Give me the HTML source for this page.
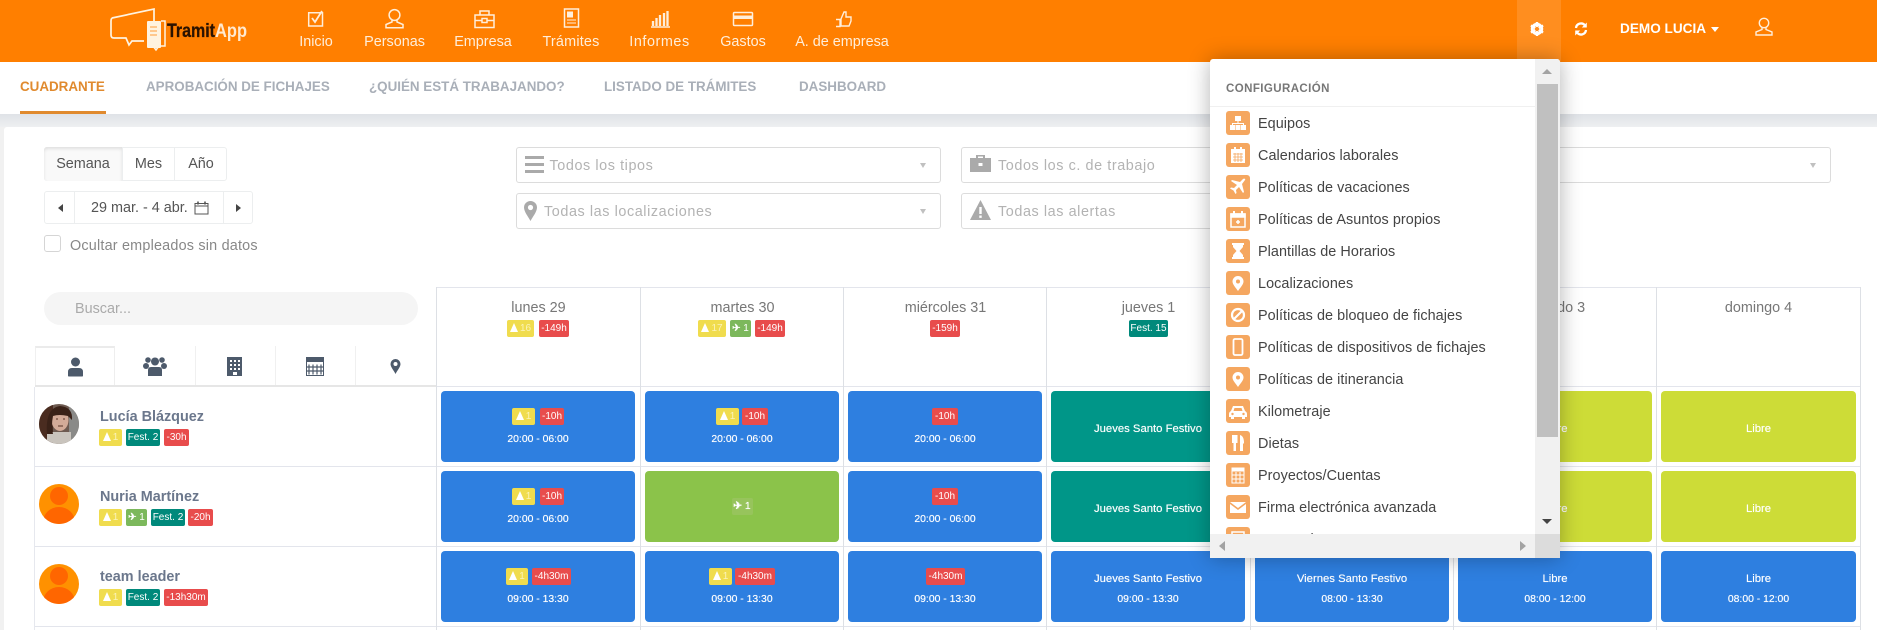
<!DOCTYPE html>
<html lang="es"><head><meta charset="utf-8"><title>TramitApp</title>
<style>
*{box-sizing:border-box}
html,body{margin:0;padding:0}
body{width:1877px;height:630px;position:relative;overflow:hidden;background:#f1f1f1;font-family:"Liberation Sans",sans-serif;color:#777}
.a,.c,.b,.t,.n,.l,.tab{position:absolute}
svg{position:absolute;overflow:visible}
.n{top:33px;height:18px;line-height:18px;font-size:14.4px;color:#ffeeda;text-align:center;white-space:nowrap;transform:translateX(-50%)}
.tab{top:78px;height:18px;line-height:18px;font-size:13.4px;font-weight:bold;color:#a9afb8;white-space:nowrap}
.c{border-radius:4px;color:#fff;text-align:center;font-size:10.4px;width:194px;height:71px;text-shadow:0 0 .6px rgba(255,255,255,.8)}
.bl{background:#2e7fe0}.gr{background:#8bc34a}.te{background:#009688}.li{background:#cddc37}
.b{height:17px;border-radius:2px;line-height:17px;font-size:10px;color:#fff;text-align:center;white-space:nowrap}
.y{background:#f0dc4e;color:#fbf3b8}.r{background:#e84c4c}.g{background:#7cb85c}.e{background:#00897b}
.t{left:0;width:100%;height:14px;line-height:14px;color:#fff;white-space:nowrap}
.j{font-size:11.3px}
u{display:inline-block;width:0;height:0;border-left:4.5px solid transparent;border-right:4.5px solid transparent;border-bottom:9px solid #fff;vertical-align:-1px;margin-right:2px;text-decoration:none}
.vl{position:absolute;width:1px;background:#dde0e5;top:287px;height:343px}
.hl{position:absolute;height:1px;background:#e3e5ec}
.nm{position:absolute;left:100px;font-size:14.4px;font-weight:bold;color:#6b778c;height:18px;line-height:18px;white-space:nowrap}
.f{position:absolute;border:1px solid #dcdcdc;border-radius:3px;height:36px;background:#fff}
.ph{position:absolute;font-size:14.4px;color:#b3b3b3;letter-spacing:.58px;white-space:nowrap;height:18px;line-height:18px}
.car{position:absolute;width:0;height:0;border-left:3.5px solid transparent;border-right:3.5px solid transparent;border-top:5px solid #c0c0c0}
.d{position:absolute;font-size:14.4px;color:#777;text-align:center;white-space:nowrap;height:18px;line-height:18px;width:203px;top:299px}
.ic{position:absolute;left:16px;width:24px;height:24px;border-radius:3px;background:#f5a760}
.ic svg{left:0;top:0;width:24px;height:24px}
.it{position:absolute;left:48px;font-size:14.4px;color:#444;white-space:nowrap;height:20px;line-height:20px;letter-spacing:.06px;margin-top:1px}
</style></head><body>

<!-- header -->
<div class="a" style="left:0;top:0;width:1877px;height:62px;background:#ff7f00"></div>
<div class="a" style="left:1517px;top:0;width:44px;height:62px;background:#ff8e1f"></div>

<svg style="left:100px;top:0" width="160" height="62" viewBox="0 0 160 62" fill="none">
<path d="M12 18 L54 9 V22 M44 41 H32 L29 45 L26 38 H14 Q11 38 11 35 V21 Q11 19 12 18" stroke="#fff3e0" stroke-width="1.7"/>
<rect x="47" y="21" width="14" height="27" rx="1" fill="#fff3e0"/>
<path d="M61 21 H65 V46 H59 L56 50 L53 46 H47" stroke="#fff3e0" stroke-width="1.5"/>
<path d="M50 27h7M50 31h7M50 35h7" stroke="#ff9c3a" stroke-width="1"/>
<text x="67" y="37" font-family="Liberation Sans" font-weight="bold" font-size="19.500" fill="#2b1300" stroke="#2b1300" stroke-width=".3" textLength="48" lengthAdjust="spacingAndGlyphs">Tramit</text>
<text x="115" y="37" font-family="Liberation Sans" font-weight="bold" font-size="19.500" fill="#ffe9d0" textLength="32" lengthAdjust="spacingAndGlyphs">App</text>
</svg>

<svg style="left:0;top:0" width="900" height="34" fill="none" stroke="#ffeeda" stroke-width="1.5">
<path d="M308.7 12.7H322.500V26H308.700Z"/><path d="M312 18l3 4 7-11" stroke-width="1.8"/>
<circle cx="394.500" cy="15" r="5.400"/><path d="M392 20v2l-6 2.500v3.300h17v-3.300l-6-2.500v-2"/>
<path d="M475 15h19v12.500h-19zM480 15v-4h9v4M475 20.500h7M487 20.500h7"/><rect x="482" y="18.500" width="5" height="4"/>
<rect x="564.500" y="9" width="14" height="18"/><rect x="567" y="11.500" width="6" height="6" fill="#ffeeda" stroke="none"/><path d="M567 20h9M567 23h9" stroke-width="1"/>
<path d="M651 27h19"/><path d="M653 26v-5M656.500 26v-8M660 26v-11M664 26v-13M667.500 26v-15" stroke-width="2.300"/>
<rect x="733.500" y="12.500" width="19" height="13" rx="1"/><rect x="733.500" y="15.500" width="19" height="3.500" fill="#ffeeda" stroke="none"/>
<path d="M841 19l3-7h2v5h5v4l-2 5h-8v-7zM836 19.500h4v7h-4" stroke-width="1.400"/>
</svg>

<div class="n" style="left:316px">Inicio</div>
<div class="n" style="left:394.500px">Personas</div>
<div class="n" style="left:483px">Empresa</div>
<div class="n" style="left:571px;letter-spacing:.2px">Trámites</div>
<div class="n" style="left:659.500px;letter-spacing:.55px">Informes</div>
<div class="n" style="left:743px">Gastos</div>
<div class="n" style="left:842px">A. de empresa</div>

<!-- header right -->
<svg style="left:1528.500px;top:21px" width="16" height="16" viewBox="0 0 16 16"><circle cx="8" cy="8" r="4.700" fill="none" stroke="#fff" stroke-width="3"/><path d="M8 1v14M1.900 4.500l12.200 7M1.900 11.500l12.200-7" stroke="#fff" stroke-width="2.400"/><circle cx="8" cy="8" r="2.100" fill="#ff8e1f"/></svg>
<svg style="left:1574px;top:22px" width="14" height="14" viewBox="0 0 14 14" fill="none" stroke="#fff" stroke-width="2.300"><path d="M2 6a5 5 0 0 1 9-2.500M12 8a5 5 0 0 1-9 2.500"/><path d="M12.800 0.500v5h-5z M1.200 13.500v-5h5z" fill="#fff" stroke="none"/></svg>
<div class="a" style="left:1620px;top:21px;height:16px;line-height:16px;font-size:13.600px;font-weight:bold;color:#fff;white-space:nowrap">DEMO LUCIA</div>
<div class="a" style="left:1711px;top:27px;width:0;height:0;border-left:4.500px solid transparent;border-right:4.500px solid transparent;border-top:5px solid #fff"></div>
<svg style="left:1754px;top:17px" width="20" height="20" fill="none" stroke="#ffeeda" stroke-width="1.400"><circle cx="10" cy="6" r="4.700"/><path d="M8 10.500v2l-6 2.500v3h16v-3l-6-2.500v-2"/></svg>

<!-- tabs bar -->
<div class="a" style="left:0;top:62px;width:1877px;height:52px;background:#fff"></div>
<div class="tab" style="left:20px;color:#e08a2e">CUADRANTE</div>
<div class="tab" style="left:146px">APROBACIÓN DE FICHAJES</div>
<div class="tab" style="left:369px">¿QUIÉN ESTÁ TRABAJANDO?</div>
<div class="tab" style="left:604px">LISTADO DE TRÁMITES</div>
<div class="tab" style="left:799px">DASHBOARD</div>
<div class="a" style="left:20px;top:111px;width:86px;height:3px;background:#e08a2e"></div>
<div class="a" style="left:0;top:114px;width:1877px;height:13px;background:linear-gradient(#dfe2e7,#eeeff1)"></div>

<!-- card -->
<div class="a" style="left:4px;top:127px;width:1873px;height:503px;background:#fff;border-radius:3px 0 0 0"></div>

<!-- period -->
<div class="a" style="left:44px;top:147px;width:183px;height:34px;border:1px solid #eceeef;border-radius:3px"></div>
<div class="a" style="left:44px;top:147px;width:78px;height:34px;background:#f9f9f9;box-shadow:inset 0 2px 3px rgba(0,0,0,.1);border-radius:3px 0 0 3px;text-align:center;line-height:34px;font-size:14.400px;color:#555">Semana</div>
<div class="a" style="left:122px;top:147px;width:53px;height:34px;border-left:1px solid #eceeef;border-right:1px solid #eceeef;text-align:center;line-height:34px;font-size:14.400px;color:#555">Mes</div>
<div class="a" style="left:175px;top:147px;width:52px;height:34px;text-align:center;line-height:34px;font-size:14.400px;color:#555">Año</div>

<div class="a" style="left:44px;top:191px;width:209px;height:33px;border:1px solid #eceeef;border-radius:3px"></div>
<div class="a" style="left:74px;top:191px;width:150px;height:33px;border-left:1px solid #eceeef;border-right:1px solid #eceeef"></div>
<div class="a" style="left:58px;top:204px;width:0;height:0;border-top:4px solid transparent;border-bottom:4px solid transparent;border-right:5px solid #444"></div>
<div class="a" style="left:236px;top:204px;width:0;height:0;border-top:4px solid transparent;border-bottom:4px solid transparent;border-left:5px solid #444"></div>
<div class="a" style="left:91px;top:199px;height:18px;line-height:18px;font-size:14.400px;color:#555;white-space:nowrap">29 mar. - 4 abr.</div>
<svg style="left:194px;top:201px" width="15" height="14" fill="none" stroke="#555" stroke-width="1"><rect x="1" y="2.500" width="13" height="10.500"/><path d="M4 .5v3M11 .5v3" stroke-width="1.600"/><path d="M1 5h13"/></svg>

<div class="a" style="left:44px;top:235px;width:17px;height:17px;border:1px solid #d5d5d5;border-radius:3px"></div>
<div class="a" style="left:70px;top:237px;height:18px;line-height:18px;font-size:14.400px;color:#888;white-space:nowrap;letter-spacing:.2px">Ocultar empleados sin datos</div>

<div class="a" style="left:44px;top:292px;width:374px;height:33px;border-radius:17px;background:#f5f5f5"></div>
<div class="a" style="left:75px;top:300px;height:18px;line-height:18px;font-size:14.400px;color:#aaa">Buscar...</div>

<!-- filters -->
<div class="f" style="left:516px;top:147px;width:425px"></div>
<div class="f" style="left:516px;top:193px;width:425px"></div>
<div class="f" style="left:961px;top:147px;width:425px"></div>
<div class="f" style="left:961px;top:193px;width:425px"></div>
<div class="f" style="left:1406px;top:147px;width:425px"></div>
<div class="ph" style="left:549.500px;top:157px">Todos los tipos</div>
<div class="ph" style="left:544px;top:202.500px">Todas las localizaciones</div>
<div class="ph" style="left:998px;top:157px">Todos los c. de trabajo</div>
<div class="ph" style="left:998px;top:202.500px">Todas las alertas</div>
<div class="ph" style="left:1430px;top:157px">Todos los grupos</div>
<div class="car" style="left:919.500px;top:163px"></div><div class="car" style="left:919.500px;top:209px"></div><div class="car" style="left:1809.500px;top:163px"></div>
<svg style="left:525px;top:156px" width="19" height="18" fill="#aaa"><rect y="0" width="19" height="3"/><rect y="7" width="19" height="3"/><rect y="14" width="19" height="3"/></svg>
<svg style="left:524px;top:201px" width="13" height="20" fill="#aaa"><path d="M6.500 0a6.500 6.500 0 0 1 6.500 6.500c0 4-4 9-6.500 13.500C4 15.500 0 10.500 0 6.500A6.500 6.500 0 0 1 6.500 0z"/><circle cx="6.500" cy="6.500" r="2.600" fill="#fff"/></svg>
<svg style="left:970px;top:154px" width="21" height="19" fill="#aaa"><path d="M6 4V1h9v3h6v14H0V4zM8 2.500V4h5V2.500z"/><rect x="8.500" y="9" width="4" height="3" fill="#fff"/></svg>
<svg style="left:970px;top:200px" width="21" height="20" fill="#aaa"><path d="M10.500 0L21 20H0z"/><rect x="9.300" y="7" width="2.400" height="7" fill="#fff"/><rect x="9.300" y="15.500" width="2.400" height="2.400" fill="#fff"/></svg>

<!-- grid lines -->
<div class="hl" style="left:436px;top:287px;width:1425px"></div>
<div class="hl" style="left:436px;top:386px;width:1425px"></div>
<div class="a" style="left:35px;top:385px;width:401px;height:2px;background:#e6e6e6"></div>
<div class="hl" style="left:35px;top:466px;width:1826px"></div>
<div class="hl" style="left:35px;top:546px;width:1826px"></div>
<div class="hl" style="left:35px;top:626px;width:1826px"></div>
<div class="vl" style="left:436px"></div><div class="vl" style="left:640px"></div><div class="vl" style="left:843px"></div><div class="vl" style="left:1046px"></div><div class="vl" style="left:1250px"></div><div class="vl" style="left:1453px"></div><div class="vl" style="left:1656px"></div><div class="vl" style="left:1860px"></div>
<div class="vl" style="left:34px;top:387px;height:243px;background:#e6e8ee"></div>

<!-- left icon tabs -->
<div class="a" style="left:35px;top:346px;width:80px;height:39px;background:#fff;border-top:2px solid #ebebeb;border-right:1px solid #eee;border-left:1px solid #f0f0f0"></div>
<div class="vl" style="left:195px;top:346px;height:39px;background:#f0f0f0"></div><div class="vl" style="left:275px;top:346px;height:39px;background:#f0f0f0"></div><div class="vl" style="left:355px;top:346px;height:39px;background:#f0f0f0"></div>
<svg style="left:0;top:0" width="436" height="386" fill="#4d5a6b">
<circle cx="75.500" cy="362" r="4.500"/><path d="M68 376v-4q0-4 4-4h7q4 0 4 4v4q0 .5-1 .5H69q-1 0-1-.500z"/>
<circle cx="155" cy="361.500" r="4"/><circle cx="148" cy="360" r="2.800"/><circle cx="162" cy="360" r="2.800"/><circle cx="146" cy="366" r="3"/><circle cx="164" cy="366" r="3"/><path d="M148 376v-6q0-3 3-3h8q3 0 3 3v6z"/>
<path d="M227 357h15v19h-15z"/><g fill="#fff"><rect x="230" y="360" width="2" height="2"/><rect x="234" y="360" width="2" height="2"/><rect x="238" y="360" width="2" height="2"/><rect x="230" y="364" width="2" height="2"/><rect x="234" y="364" width="2" height="2"/><rect x="238" y="364" width="2" height="2"/><rect x="230" y="368" width="2" height="2"/><rect x="234" y="368" width="2" height="2"/><rect x="238" y="368" width="2" height="2"/><rect x="233" y="372" width="4" height="3"/></g>
<path d="M306 357h18v5h-18z"/><rect x="306.500" y="357.500" width="17" height="18" fill="none" stroke="#4d5a6b" stroke-width="1"/><path d="M309 364.500v10M313 364.500v10M317 364.500v10M321 364.500v10M307 367h16M307 371h16" stroke="#4d5a6b" stroke-width="1.200"/>
<path d="M395.500 359a5 5 0 0 1 5 5c0 3-3 6-5 10c-2-4-5-7-5-10a5 5 0 0 1 5-5z"/><circle cx="395.500" cy="364" r="2" fill="#fff"/>
</svg>

<!-- day headers -->
<div class="d" style="left:437px">lunes 29</div>
<div class="d" style="left:641px">martes 30</div>
<div class="d" style="left:844px">miércoles 31</div>
<div class="d" style="left:1047px">jueves 1</div>
<div class="d" style="left:1454px">sábado 3</div>
<div class="d" style="left:1657px">domingo 4</div>
<div class="b y" style="left:507px;top:320px;width:27px"><u></u>16</div><div class="b r" style="left:539px;top:320px;width:30px">-149h</div>
<div class="b y" style="left:698px;top:320px;width:28px"><u></u>17</div><div class="b g" style="left:730px;top:320px;width:21px"><b>✈</b> 1</div><div class="b r" style="left:755px;top:320px;width:30px">-149h</div>
<div class="b r" style="left:930px;top:320px;width:30px">-159h</div>
<div class="b e" style="left:1129px;top:320px;width:39px">Fest. 15</div>

<!-- employees -->
<svg style="left:39px;top:404px" width="40" height="40" viewBox="0 0 40 40"><defs><clipPath id="cp"><circle cx="20" cy="20" r="20"/></clipPath></defs><g clip-path="url(#cp)"><rect width="40" height="40" fill="#6d5a50"/><rect width="14" height="40" fill="#4a2c20"/><rect x="30" width="10" height="40" fill="#8a8a88"/><path d="M8 40v-12h24v12z" fill="#c9c4bd"/><ellipse cx="21" cy="16" rx="8.500" ry="11" fill="#d3ab98"/><path d="M8 30Q6 4 21 2Q34 3 33 16L29 12Q20 10 14 12Q12 22 14 30z" fill="#3a2218"/><path d="M17 15h2M24 15h2M19 22h5" stroke="#5a3428"/></g></svg>
<svg style="left:39px;top:484px" width="40" height="40" viewBox="0 0 40 40"><defs><clipPath id="cq"><circle cx="20" cy="20" r="20"/></clipPath></defs><g clip-path="url(#cq)"><rect width="40" height="40" fill="#ff9100"/><circle cx="20" cy="12" r="9" fill="#ff6600"/><ellipse cx="20" cy="38" rx="16" ry="15" fill="#ff6600"/></g></svg>
<svg style="left:39px;top:564px" width="40" height="40" viewBox="0 0 40 40"><g clip-path="url(#cq)"><rect width="40" height="40" fill="#ff9100"/><circle cx="20" cy="12" r="9" fill="#ff6600"/><ellipse cx="20" cy="38" rx="16" ry="15" fill="#ff6600"/></g></svg>

<div class="nm" style="top:408px">Lucía Blázquez</div>
<div class="nm" style="top:488px">Nuria Martínez</div>
<div class="nm" style="top:568px">team leader</div>

<div class="b y" style="left:99px;top:429px;width:23px"><u></u>1</div><div class="b e" style="left:126px;top:429px;width:34px">Fest. 2</div><div class="b r" style="left:164px;top:429px;width:25px">-30h</div>
<div class="b y" style="left:99px;top:509px;width:23px"><u></u>1</div><div class="b g" style="left:126px;top:509px;width:21px"><b>✈</b> 1</div><div class="b e" style="left:151px;top:509px;width:34px">Fest. 2</div><div class="b r" style="left:188px;top:509px;width:25px">-20h</div>
<div class="b y" style="left:99px;top:589px;width:23px"><u></u>1</div><div class="b e" style="left:126px;top:589px;width:34px">Fest. 2</div><div class="b r" style="left:164px;top:589px;width:44px">-13h30m</div>

<!-- row 1 -->
<div class="c bl" style="left:441px;top:391px"><div class="t" style="top:42px">20:00 - 06:00</div></div>
<div class="b y" style="left:512px;top:408px;width:23px"><u></u>1</div><div class="b r" style="left:540px;top:408px;width:24px">-10h</div>
<div class="c bl" style="left:645px;top:391px"><div class="t" style="top:42px">20:00 - 06:00</div></div>
<div class="b y" style="left:716px;top:408px;width:23px"><u></u>1</div><div class="b r" style="left:742px;top:408px;width:26px">-10h</div>
<div class="c bl" style="left:848px;top:391px"><div class="t" style="top:42px">20:00 - 06:00</div></div>
<div class="b r" style="left:932px;top:408px;width:26px">-10h</div>
<div class="c te" style="left:1051px;top:391px"><div class="t j" style="top:31px">Jueves Santo Festivo</div></div>
<div class="c te" style="left:1255px;top:391px"><div class="t j" style="top:31px">Viernes Santo Festivo</div></div>
<div class="c li" style="left:1458px;top:391px"><div class="t j" style="top:31px">Libre</div></div>
<div class="c li" style="left:1661px;top:391px;width:195px"><div class="t j" style="top:31px">Libre</div></div>

<!-- row 2 -->
<div class="c bl" style="left:441px;top:471px"><div class="t" style="top:42px">20:00 - 06:00</div></div>
<div class="b y" style="left:512px;top:488px;width:23px"><u></u>1</div><div class="b r" style="left:540px;top:488px;width:24px">-10h</div>
<div class="c gr" style="left:645px;top:471px"><div class="a" style="left:87px;top:27px;width:21px;height:17px;background:#97c45c;border-radius:2px"></div><div class="t" style="top:29px"><b>✈</b> 1</div></div>
<div class="c bl" style="left:848px;top:471px"><div class="t" style="top:42px">20:00 - 06:00</div></div>
<div class="b r" style="left:932px;top:488px;width:26px">-10h</div>
<div class="c te" style="left:1051px;top:471px"><div class="t j" style="top:31px">Jueves Santo Festivo</div></div>
<div class="c te" style="left:1255px;top:471px"><div class="t j" style="top:31px">Viernes Santo Festivo</div></div>
<div class="c li" style="left:1458px;top:471px"><div class="t j" style="top:31px">Libre</div></div>
<div class="c li" style="left:1661px;top:471px;width:195px"><div class="t j" style="top:31px">Libre</div></div>

<!-- row 3 -->
<div class="c bl" style="left:441px;top:551px"><div class="t" style="top:42px">09:00 - 13:30</div></div>
<div class="b y" style="left:506px;top:568px;width:22px"><u></u>1</div><div class="b r" style="left:532px;top:568px;width:39px">-4h30m</div>
<div class="c bl" style="left:645px;top:551px"><div class="t" style="top:42px">09:00 - 13:30</div></div>
<div class="b y" style="left:709px;top:568px;width:23px"><u></u>1</div><div class="b r" style="left:735px;top:568px;width:40px">-4h30m</div>
<div class="c bl" style="left:848px;top:551px"><div class="t" style="top:42px">09:00 - 13:30</div></div>
<div class="b r" style="left:926px;top:568px;width:39px">-4h30m</div>
<div class="c bl" style="left:1051px;top:551px"><div class="t j" style="top:21px">Jueves Santo Festivo</div><div class="t" style="top:42px">09:00 - 13:30</div></div>
<div class="c bl" style="left:1255px;top:551px"><div class="t j" style="top:21px">Viernes Santo Festivo</div><div class="t" style="top:42px">08:00 - 13:30</div></div>
<div class="c bl" style="left:1458px;top:551px"><div class="t j" style="top:21px">Libre</div><div class="t" style="top:42px">08:00 - 12:00</div></div>
<div class="c bl" style="left:1661px;top:551px;width:195px"><div class="t j" style="top:21px">Libre</div><div class="t" style="top:42px">08:00 - 12:00</div></div>

<!-- dropdown -->
<div class="a" style="left:1210px;top:59px;width:350px;height:499px;background:#fff;border-radius:3px 3px 0 0;box-shadow:0 0 22px rgba(0,0,0,.3);overflow:hidden">
  <div class="a" style="left:16px;top:23px;height:14px;line-height:14px;font-size:11.500px;font-weight:bold;color:#777;white-space:nowrap;letter-spacing:.42px">CONFIGURACIÓN</div>
  <div class="a" style="left:0;top:47px;width:325px;height:1px;background:#f0f0f0"></div>

  <div class="ic" style="top:52px"><svg viewBox="0 0 24 24" fill="#fff"><rect x="9" y="5" width="6" height="5"/><rect x="4" y="14" width="5" height="5"/><rect x="9.500" y="14" width="5" height="5"/><rect x="15" y="14" width="5" height="5"/><path d="M11.500 10h1v2h5.500v2h-1v-1H7v1H6v-2h5.500z"/></svg></div><div class="it" style="top:54px">Equipos</div>
  <div class="ic" style="top:84px"><svg viewBox="0 0 24 24" fill="#fff"><path d="M5 6h14v14H5zM8 4h2v3H8zM14 4h2v3h-2z"/><path d="M7 11h10M7 14h10M7 17h10M9 10v9M12 10v9M15 10v9" stroke="#f5a760" stroke-width=".8"/></svg></div><div class="it" style="top:86px">Calendarios laborales</div>
  <div class="ic" style="top:116px"><svg viewBox="0 0 24 24" fill="#fff"><path d="M19 5c1-1-1-2-2-1l-3 3-8-2-1 1 6 4-3 3-3-.5-1 1 3.500 2 2 3.500 1-1-.5-3 3-3 4 6 1-1-2-8z"/></svg></div><div class="it" style="top:118px">Políticas de vacaciones</div>
  <div class="ic" style="top:148px"><svg viewBox="0 0 24 24" fill="none" stroke="#fff" stroke-width="1.500"><rect x="5" y="7" width="14" height="13"/><path d="M5 7h14v3H5z" fill="#fff"/><path d="M8 4v3M16 4v3" stroke-width="2"/><path d="M10 15h4M12 13v4"/></svg></div><div class="it" style="top:150px">Políticas de Asuntos propios</div>
  <div class="ic" style="top:180px"><svg viewBox="0 0 24 24" fill="#fff"><path d="M6 4h12v2h-1v2l-3.500 4 3.500 4v2h1v2H6v-2h1v-2l3.500-4L7 8V6H6z"/></svg></div><div class="it" style="top:182px">Plantillas de Horarios</div>
  <div class="ic" style="top:212px"><svg viewBox="0 0 24 24" fill="#fff"><path d="M12 5a5.500 5.500 0 0 1 5.500 5.500c0 3-3.500 6.500-5.500 9.500-2-3-5.500-6.500-5.500-9.500A5.500 5.500 0 0 1 12 5z"/><circle cx="12" cy="10.500" r="2" fill="#f5a760"/></svg></div><div class="it" style="top:214px">Localizaciones</div>
  <div class="ic" style="top:244px"><svg viewBox="0 0 24 24" fill="none" stroke="#fff" stroke-width="2.200"><circle cx="12" cy="12" r="6"/><path d="M8 16l8-8"/></svg></div><div class="it" style="top:246px">Políticas de bloqueo de fichajes</div>
  <div class="ic" style="top:276px"><svg viewBox="0 0 24 24" fill="none" stroke="#fff" stroke-width="1.800"><rect x="7.500" y="4" width="9" height="16" rx="1.500"/></svg></div><div class="it" style="top:278px">Políticas de dispositivos de fichajes</div>
  <div class="ic" style="top:308px"><svg viewBox="0 0 24 24" fill="#fff"><path d="M12 5a5.500 5.500 0 0 1 5.500 5.500c0 3-3.500 6.500-5.500 9.500-2-3-5.500-6.500-5.500-9.500A5.500 5.500 0 0 1 12 5z"/><circle cx="12" cy="10.500" r="2" fill="#f5a760"/></svg></div><div class="it" style="top:310px">Políticas de itinerancia</div>
  <div class="ic" style="top:340px"><svg viewBox="0 0 24 24" fill="#fff"><path d="M7 7h10l2 5q2 1 2 3v3h-2v2h-3v-2H8v2H5v-2H3v-3q0-2 2-3z"/><path d="M8.500 9h7l1 3h-9z" fill="#f5a760"/><circle cx="6.500" cy="15" r="1.200" fill="#f5a760"/><circle cx="17.500" cy="15" r="1.200" fill="#f5a760"/></svg></div><div class="it" style="top:342px">Kilometraje</div>
  <div class="ic" style="top:372px"><svg viewBox="0 0 24 24" fill="#fff"><path d="M6 4h5.500v8H10v8H7.500v-8H6zM14 4q4 1 4 8l-1 1v7h-3z"/></svg></div><div class="it" style="top:374px">Dietas</div>
  <div class="ic" style="top:404px"><svg viewBox="0 0 24 24" fill="none" stroke="#fff" stroke-width="1"><rect x="6" y="5" width="12" height="15"/><path d="M6 5h12v3H6z" fill="#fff"/><path d="M6 12h12M6 16h12M10 9v11M14 9v11"/></svg></div><div class="it" style="top:406px">Proyectos/Cuentas</div>
  <div class="ic" style="top:436px"><svg viewBox="0 0 24 24" fill="#fff"><path d="M4 7h16l-8 6zM4 9l8 6 8-6v9H4z"/></svg></div><div class="it" style="top:438px">Firma electrónica avanzada</div>
  <div class="ic" style="top:468px"><svg viewBox="0 0 24 24" fill="none" stroke="#fff" stroke-width="1.500"><rect x="6" y="5" width="12" height="15"/></svg></div><div class="it" style="top:470px">Integraciones</div>

  <!-- scrollbars -->
  <div class="a" style="left:325px;top:0;width:25px;height:475px;background:#f1f1f1"></div>
  <div class="a" style="left:327px;top:25px;width:21px;height:353px;background:#c0c0c0"></div>
  <div class="a" style="left:332px;top:10px;width:0;height:0;border-left:5.500px solid transparent;border-right:5.500px solid transparent;border-bottom:5px solid #a3a3a3"></div>
  <div class="a" style="left:332px;top:460px;width:0;height:0;border-left:5.500px solid transparent;border-right:5.500px solid transparent;border-top:5px solid #444"></div>
  <div class="a" style="left:0;top:475px;width:325px;height:24px;background:#f1f1f1"></div>
  <div class="a" style="left:325px;top:475px;width:25px;height:24px;background:#dcdcdc"></div>
  <div class="a" style="left:9px;top:482px;width:0;height:0;border-top:5.500px solid transparent;border-bottom:5.500px solid transparent;border-right:6px solid #a3a3a3"></div>
  <div class="a" style="left:310px;top:482px;width:0;height:0;border-top:5.500px solid transparent;border-bottom:5.500px solid transparent;border-left:6px solid #a3a3a3"></div>
</div>
</body></html>
